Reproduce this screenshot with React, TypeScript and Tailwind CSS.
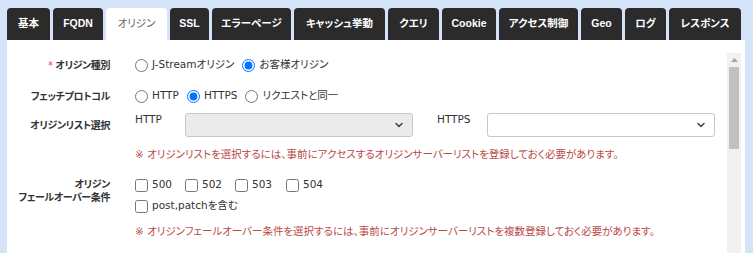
import { ChevronDown } from 'lucide-react'

const tabs = [
  { label: '基本', w: 'w-[43px]' },
  { label: 'FQDN', w: 'w-[50px]' },
  { label: 'オリジン', w: 'w-[61px]', active: true },
  { label: 'SSL', w: 'w-[39px]' },
  { label: 'エラーページ', w: 'w-[79px]' },
  { label: 'キャッシュ挙動', w: 'w-[91px]' },
  { label: 'クエリ', w: 'w-[51px]' },
  { label: 'Cookie', w: 'w-[54px]' },
  { label: 'アクセス制御', w: 'w-[79px]' },
  { label: 'Geo', w: 'w-[41px]' },
  { label: 'ログ', w: 'w-[41px]' },
  { label: 'レスポンス', w: 'w-[72px]' },
]

// proportional kana, closer to Meiryo UI
const font =
  "font-['DejaVu_Sans','Noto_Sans_CJK_JP',sans-serif] [font-variant-east-asian:proportional-width] [font-feature-settings:'palt'_1]"

function Radio({ label, checked, name }: { label: string; checked?: boolean; name: string }) {
  return (
    <label className="flex items-center gap-[4px] mr-[8px]">
      <input type="radio" name={name} defaultChecked={checked} className="m-0 w-[13px] h-[13px]" />
      <span>{label}</span>
    </label>
  )
}

function Check({ label, className = '' }: { label: string; className?: string }) {
  return (
    <label className={`flex items-center gap-[4px] ${className}`}>
      <input type="checkbox" className="m-0 w-[13px] h-[13px]" />
      <span>{label}</span>
    </label>
  )
}

function FakeSelect({ disabled }: { disabled?: boolean }) {
  return (
    <div
      className={`w-[228px] h-[24px] rounded-[3px] border border-[#c8c8c8] flex items-center justify-end pr-[7px] ${
        disabled ? 'bg-[#ebebeb]' : 'bg-white'
      }`}
    >
      <ChevronDown size={12} strokeWidth={3} className="text-[#444]" />
    </div>
  )
}

function Label({ children }: { children: React.ReactNode }) {
  return (
    <div className="w-[103px] shrink-0 text-right font-bold text-[#333] text-[10px] leading-[13px] tracking-[-0.4px] whitespace-nowrap">
      {children}
    </div>
  )
}

export default function App() {
  return (
    <div
      className={`w-[753px] h-[253px] bg-[#d5e3f8] pt-[8px] pl-[7px] overflow-hidden text-[10.5px] text-[#333] ${font}`}
    >
      <div className="flex gap-[3px] h-[32px]">
        {tabs.map((t) => (
          <div
            key={t.label}
            className={`${t.w} h-[32px] rounded-t-[4px] flex items-center justify-center font-['Liberation_Sans','Noto_Sans_CJK_JP',sans-serif] ${
              t.active ? 'bg-white text-[#666]' : 'bg-[#2b2b2b] text-white font-bold'
            }`}
          >
            {t.label}
          </div>
        ))}
      </div>

      <div className="w-[738px] h-[213px] bg-white pt-[13px] pr-[4px] flex">
        <div className="flex-1 flex flex-col">
          <div className="flex items-center h-[24px]">
            <Label>
              <span className="text-[#d9534f] font-normal">* </span>オリジン種別
            </Label>
            <div className="ml-[25px] flex items-center">
              <Radio name="type" label="J-Streamオリジン" />
              <Radio name="type" label="お客様オリジン" checked />
            </div>
          </div>

          <div className="flex items-center h-[24px] mt-[7px]">
            <Label>フェッチプロトコル</Label>
            <div className="ml-[25px] flex items-center">
              <Radio name="proto" label="HTTP" />
              <Radio name="proto" label="HTTPS" checked />
              <Radio name="proto" label="リクエストと同一" />
            </div>
          </div>

          <div className="flex items-center h-[24px] mt-[5px]">
            <Label>オリジンリスト選択</Label>
            <div className="ml-[25px] flex items-start h-[24px]">
              <span className="w-[50px] mt-[-1px]">HTTP</span>
              <FakeSelect disabled />
              <span className="w-[50px] ml-[24px] mt-[-1px]">HTTPS</span>
              <FakeSelect />
            </div>
          </div>

          <div className="ml-[128px] mt-[8px] h-[18px] leading-[18px] text-[#b94a48]">
            ※ オリジンリストを選択するには、事前にアクセスするオリジンサーバーリストを登録しておく必要があります。
          </div>

          <div className="flex mt-[15px]">
            <Label>
              オリジン
              <br />
              フェールオーバー条件
            </Label>
            <div className="ml-[25px] flex flex-col gap-[1px] mt-[-3px]">
              <div className="flex items-center h-[20px]">
                <Check label="500" className="w-[50px]" />
                <Check label="502" className="w-[50px]" />
                <Check label="503" className="w-[51px]" />
                <Check label="504" />
              </div>
              <div className="flex items-center h-[20px]">
                <Check label="post,patchを含む" />
              </div>
            </div>
          </div>

          <div className="ml-[128px] mt-[6px] h-[18px] leading-[18px] text-[#b94a48]">
            ※ オリジンフェールオーバー条件を選択するには、事前にオリジンサーバーリストを複数登録しておく必要があります。
          </div>
        </div>

        <div className="w-[14px] bg-[#f1f1f1] flex flex-col items-center">
          <div className="h-[13px] flex items-center justify-center">
            <svg width="7" height="4" viewBox="0 0 7 4">
              <path d="M0 4 L3.5 0 L7 4 Z" fill="#a3a3a3" />
            </svg>
          </div>
          <div className="w-[10px] h-[82px] bg-[#c1c1c1] mt-[1px]" />
        </div>
      </div>
    </div>
  )
}
